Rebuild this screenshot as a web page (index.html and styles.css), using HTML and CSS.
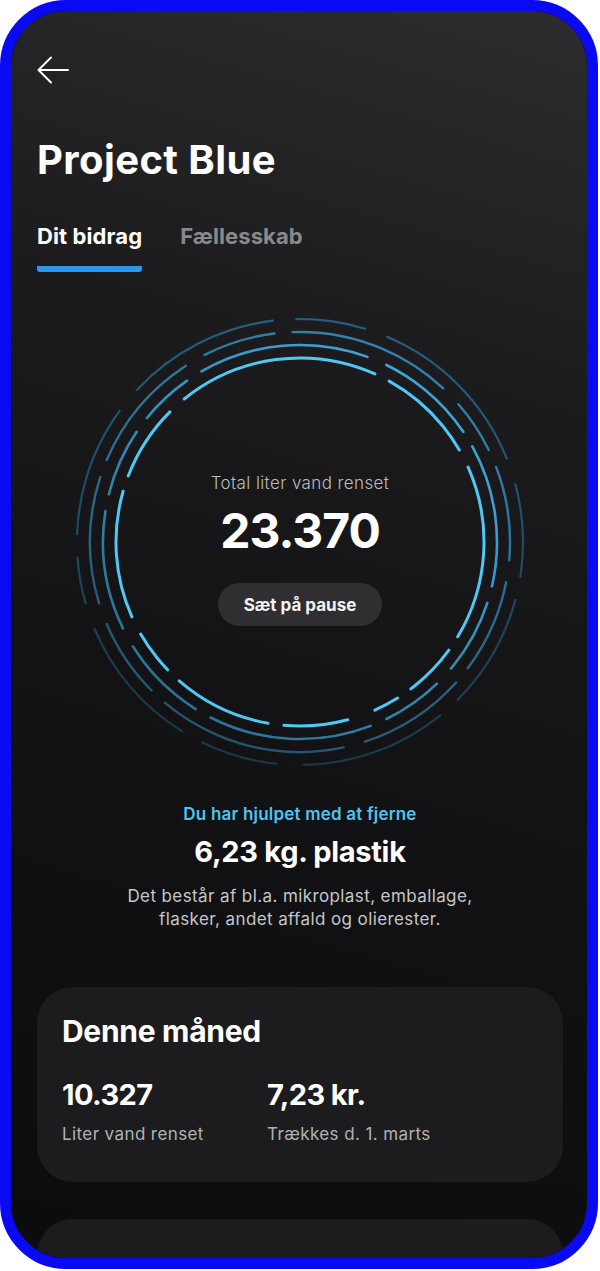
FILE: index.html
```html
<!DOCTYPE html>
<html lang="da">
<head>
	<meta charset="UTF-8" />
	<meta name="viewport" content="width=device-width, initial-scale=1.0" />
	<title>Project Blue</title>
	<link rel="stylesheet" href="styles.css">
</head>
<body>
	<div class="phone">
		<div class="screen">
			<header class="top">
				<button class="back" aria-label="Tilbage">
					<svg width="32" height="28" viewBox="0 0 32 28">
						<path d="M1.5 14 H31 M14 1.5 L1.5 14 L14 26.5" fill="none" stroke="#fff" stroke-width="2" stroke-linecap="round" stroke-linejoin="round"/>
					</svg>
				</button>
				<h1 class="title">Project Blue</h1>
				<nav class="tabs">
					<a class="tab active">Dit bidrag</a>
					<a class="tab">Fællesskab</a>
				</nav>
			</header>

			<section class="gauge">
				<svg class="rings" width="460" height="460" viewBox="0 0 460 460">
					<defs>
						<linearGradient id="g2" x1="0" y1="0" x2="0" y2="460" gradientUnits="userSpaceOnUse">
							<stop offset="0" stop-color="#2a6e92"/>
							<stop offset="1" stop-color="#3ea9dd"/>
						</linearGradient>
						<linearGradient id="g3" x1="0" y1="0" x2="0" y2="460" gradientUnits="userSpaceOnUse">
							<stop offset="0" stop-color="#22536c"/>
							<stop offset="1" stop-color="#3184b0"/>
						</linearGradient>
						<linearGradient id="g4" x1="0" y1="0" x2="0" y2="460" gradientUnits="userSpaceOnUse">
							<stop offset="0" stop-color="#1a3646"/>
							<stop offset="1" stop-color="#255f7f"/>
						</linearGradient>
					</defs>
					<!-- ringene tegnes med pathLength 360, så dash-værdierne er grader -->
					<circle cx="230" cy="230" r="223" pathLength="360" fill="none" stroke="url(#g4)" stroke-width="2.2" stroke-linecap="round"
						stroke-dasharray="28 7 40 6 18 6 45 7 24 6 30 6 38 7 20 6 35 7 12 6" transform="rotate(188 230 230)"/>
					<circle cx="230" cy="230" r="210" pathLength="360" fill="none" stroke="url(#g3)" stroke-width="2.4" stroke-linecap="round"
						stroke-dasharray="34 6 20 5 45 6 15 5 26 6 26 5 30 6 52 5 22 6 35 5" transform="rotate(203 230 230)"/>
					<circle cx="230" cy="230" r="197" pathLength="360" fill="none" stroke="url(#g2)" stroke-width="2.6" stroke-linecap="round"
						stroke-dasharray="16 5 50 6 30 5 42 5 22 6 18 5 48 5 26 6 35 5 20 5" transform="rotate(219 230 230)"/>
					<circle cx="230" cy="230" r="184" pathLength="360" fill="none" stroke="#4fc8f6" stroke-width="3" stroke-linecap="round"
						stroke-dasharray="63 5 31 6 55 5 17 5 8 9 20 5 31 5 14 6 40 5 24 6" transform="rotate(231 230 230)"/>
				</svg>
				<div class="gauge-info">
					<p class="gauge-label">Total liter vand renset</p>
					<p class="gauge-value">23.370</p>
					<button class="pause">Sæt på pause</button>
				</div>
			</section>

			<section class="impact">
				<p class="impact-lead">Du har hjulpet med at fjerne</p>
				<p class="impact-value">6,23 kg. plastik</p>
				<p class="impact-text">Det består af bl.a. mikroplast, emballage,<br>flasker, andet affald og olierester.</p>
			</section>

			<section class="card month">
				<h2 class="card-title">Denne måned</h2>
				<div class="stats">
					<div class="stat">
						<p class="stat-value">10.327</p>
						<p class="stat-label">Liter vand renset</p>
					</div>
					<div class="stat">
						<p class="stat-value">7,23 kr.</p>
						<p class="stat-label">Trækkes d. 1. marts</p>
					</div>
				</div>
			</section>

			<section class="card next"></section>
		</div>
	</div>
</body>
</html>
```

FILE: styles.css
```css
* {
	box-sizing: border-box;
}
body {
	margin: 0;
	background-color: #fff;
	font-family: Inter, "Noto Sans", sans-serif;
	color: #fff;
}
p, h1, h2 {
	margin: 0;
}
.phone {
	width: 598px;
	height: 1269px;
	border: 11px solid #0a0af2;
	border-radius: 66px;
	overflow: hidden;
	background-color: #0d0d0f;
}
.screen {
	height: 100%;
	padding: 45px 24px 0 26px;
	border-radius: 55px;
	overflow: hidden;
	background: linear-gradient(196deg, #2c2c2e 0%, #1b1b1d 30%, #131315 55%, #0c0c0e 100%);
}
.back {
	display: block;
	padding: 0;
	border: none;
	background: none;
	cursor: pointer;
}
.back svg {
	display: block;
}
.title {
	margin-top: 53px;
	font-size: 40px;
	line-height: 46px;
	font-weight: 700;
	letter-spacing: 0.4px;
}
.tabs {
	display: flex;
	gap: 38px;
	margin-top: 40px;
}
.tab {
	font-size: 22px;
	line-height: 26px;
	font-weight: 700;
	letter-spacing: 0.1px;
	color: #8a8a8c;
	padding-bottom: 17px;
	border-bottom: 6px solid transparent;
}
.tab.active {
	color: #fff;
	border-bottom-color: #2b97ee;
	border-radius: 0 0 3px 3px;
}
.gauge {
	display: grid;
	justify-items: center;
	margin-top: 40px;
}
.rings, .gauge-info {
	grid-area: 1 / 1;
}
.rings {
	display: block;
}
.gauge-info {
	display: flex;
	flex-direction: column;
	align-items: center;
	padding-top: 161px;
}
.gauge-label {
	font-size: 17px;
	line-height: 20px;
	font-weight: 300;
	letter-spacing: 0.4px;
	color: #bcbcbe;
}
.gauge-value {
	margin-top: 10px;
	font-size: 48px;
	line-height: 56px;
	font-weight: 700;
	letter-spacing: -1px;
}
.pause {
	margin-top: 24px;
	width: 164px;
	height: 43px;
	border: none;
	border-radius: 22px;
	background-color: #2f2f31;
	color: #f2f2f2;
	font-family: inherit;
	font-size: 17px;
	font-weight: 700;
	cursor: pointer;
}
.impact {
	text-align: center;
	margin-top: 31px;
}
.impact-lead {
	font-size: 17px;
	line-height: 22px;
	font-weight: 600;
	letter-spacing: 0.2px;
	color: #4dc4f2;
}
.impact-value {
	margin-top: 10px;
	font-size: 29px;
	line-height: 34px;
	font-weight: 700;
	letter-spacing: -0.3px;
}
.impact-text {
	margin-top: 16px;
	font-size: 17px;
	line-height: 23px;
	letter-spacing: 0.4px;
	color: #c6c6c8;
}
.card {
	border-radius: 36px;
	background-color: #1c1c1e;
}
.month {
	margin-top: 56px;
	height: 195px;
	padding: 26px 25px 0 25px;
}
.card-title {
	font-size: 30px;
	line-height: 36px;
	font-weight: 700;
	letter-spacing: -0.3px;
}
.stats {
	display: grid;
	grid-template-columns: 205px 1fr;
	margin-top: 28px;
}
.stat-value {
	font-size: 29px;
	line-height: 36px;
	font-weight: 700;
	letter-spacing: -0.6px;
}
.stat-label {
	margin-top: 10px;
	font-size: 17px;
	line-height: 22px;
	letter-spacing: 0.4px;
	color: #b2b2b4;
}
.next {
	margin-top: 37px;
	height: 140px;
}
```
